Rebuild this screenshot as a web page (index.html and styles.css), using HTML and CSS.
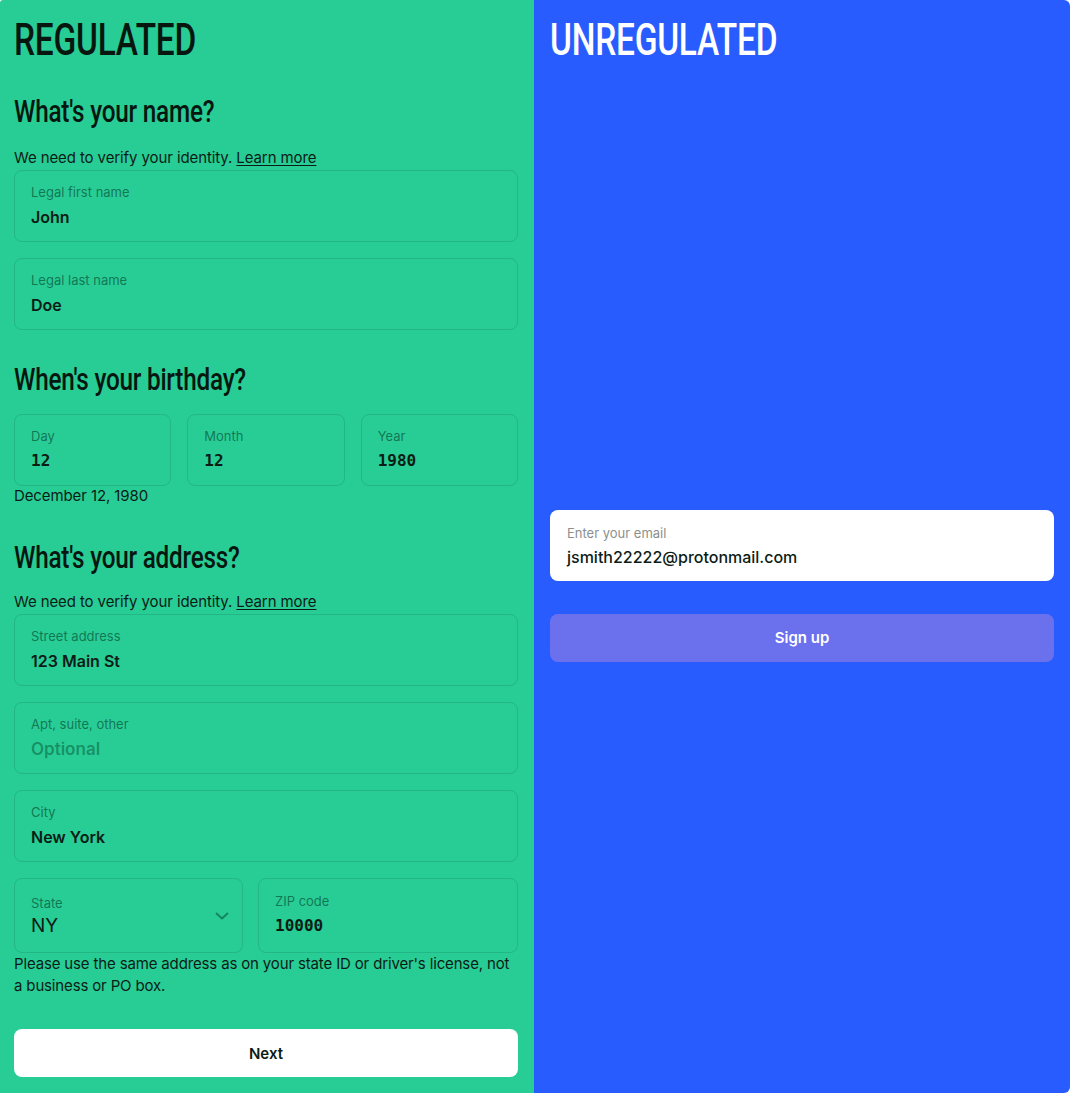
FILE: index.html
```html
<!DOCTYPE html>
<html lang="en">
<head>
<meta charset="utf-8">
<title>Regulated vs Unregulated</title>
<link rel="stylesheet" href="styles.css">
</head>
<body>
<div class="split">
  <section class="panel panel-green">
    <h1 class="title"><span class="squeeze">REGULATED</span></h1>

    <h2 class="section-title first"><span class="squeeze">What's your name?</span></h2>
    <p class="hint">We need to verify your identity. <a class="link" href="#">Learn more</a></p>
    <div class="field">
      <span class="label">Legal first name</span>
      <span class="value">John</span>
    </div>
    <div class="field gap-top">
      <span class="label">Legal last name</span>
      <span class="value">Doe</span>
    </div>

    <h2 class="section-title birthday"><span class="squeeze">When's your birthday?</span></h2>
    <div class="date-row">
      <div class="field">
        <span class="label">Day</span>
        <span class="value mono">12</span>
      </div>
      <div class="field">
        <span class="label">Month</span>
        <span class="value mono">12</span>
      </div>
      <div class="field">
        <span class="label">Year</span>
        <span class="value mono">1980</span>
      </div>
    </div>
    <p class="date-text">December 12, 1980</p>

    <h2 class="section-title address"><span class="squeeze">What's your address?</span></h2>
    <p class="hint hint-address">We need to verify your identity. <a class="link" href="#">Learn more</a></p>
    <div class="field">
      <span class="label">Street address</span>
      <span class="value">123 Main St</span>
    </div>
    <div class="field gap-top">
      <span class="label">Apt, suite, other</span>
      <span class="value placeholder">Optional</span>
    </div>
    <div class="field gap-top">
      <span class="label">City</span>
      <span class="value">New York</span>
    </div>
    <div class="state-row gap-top">
      <div class="field field-tall select">
        <span class="label label-state">State</span>
        <span class="value value-state">NY</span>
        <svg class="chevron" width="14" height="8" viewBox="0 0 14 8" aria-hidden="true"><path d="M1.5 1.5 L7 6.5 L12.5 1.5" fill="none" stroke="currentColor" stroke-width="1.8" stroke-linecap="round" stroke-linejoin="round"/></svg>
      </div>
      <div class="field field-tall">
        <span class="label">ZIP code</span>
        <span class="value mono">10000</span>
      </div>
    </div>
    <p class="note">Please use the same address as on your state ID or driver's license, not a business or PO box.</p>

    <button class="btn btn-next" type="button">Next</button>
  </section>

  <section class="panel panel-blue">
    <h1 class="title title-light"><span class="squeeze">UNREGULATED</span></h1>
    <div class="signup">
      <div class="email-field">
        <span class="label label-gray">Enter your email</span>
        <span class="value">jsmith22222@protonmail.com</span>
      </div>
      <button class="btn btn-signup" type="button">Sign up</button>
    </div>
  </section>
</div>
</body>
</html>
```

FILE: styles.css
```css
* {
  box-sizing: border-box;
}

html, body {
  margin: 0;
  padding: 0;
  background: #ffffff;
}

body {
  font-family: Inter, "Noto Sans", "Liberation Sans", sans-serif;
  color: #0c1c15;
}

.split {
  display: grid;
  grid-template-columns: 534px 1fr;
  height: 1093px;
}

.panel {
  display: flex;
  flex-direction: column;
  padding: 12px 16px 0 14px;
}

.panel-green {
  background: #28cc95;
  border-top-left-radius: 3px;
}

.panel-blue {
  background: #285cff;
  padding: 12px 16px 0 16px;
  border-top-right-radius: 6px;
  border-bottom-right-radius: 6px;
}

.title,
.section-title {
  margin: 0;
  font-family: Roboto, "DejaVu Sans Condensed", "Liberation Sans", sans-serif;
  font-weight: 500;
  color: #07170f;
  white-space: nowrap;
}

.squeeze {
  display: inline-block;
  transform: scaleX(0.76);
  transform-origin: left center;
}

.title {
  font-size: 44px;
  line-height: 56px;
  letter-spacing: -0.3px;
}

.title-light {
  color: #ffffff;
}

.section-title {
  font-size: 32px;
  line-height: 36px;
  letter-spacing: -0.3px;
}

.section-title.first {
  margin-top: 25px;
}

.section-title.birthday {
  margin-top: 31px;
}

.section-title.address {
  margin-top: 33px;
}

.hint {
  margin: 18px 0 1px;
  font-size: 15px;
  line-height: 22px;
  letter-spacing: -0.1px;
  color: #0c1c15;
}

.hint-address {
  margin-top: 16px;
}

.link {
  color: inherit;
  text-decoration: underline;
  text-underline-offset: 2px;
}

.field {
  position: relative;
  display: flex;
  flex-direction: column;
  height: 72px;
  padding: 13px 16px 0 16px;
  border: 1px solid rgba(0, 60, 35, 0.14);
  border-radius: 8px;
}

.gap-top {
  margin-top: 16px;
}

.label {
  font-size: 13px;
  line-height: 16px;
  color: rgba(0, 45, 25, 0.55);
}

.value {
  margin-top: 5px;
  font-size: 16px;
  line-height: 24px;
  font-weight: 600;
  color: #0c1c15;
}

.mono {
  font-family: "DejaVu Sans Mono", "Liberation Mono", monospace;
  font-size: 16px;
  font-weight: 700;
  letter-spacing: 0;
}

.placeholder {
  font-size: 17px;
  font-weight: 600;
  color: rgba(0, 60, 35, 0.42);
}

.date-row {
  display: grid;
  grid-template-columns: repeat(3, 1fr);
  gap: 16px;
  margin-top: 17px;
}

.date-text {
  margin: 0;
  font-size: 15px;
  line-height: 20px;
  letter-spacing: -0.1px;
}

.state-row {
  display: grid;
  grid-template-columns: 229px 1fr;
  gap: 15px;
}

.field-tall {
  height: 75px;
  padding-top: 14px;
}

.label-state {
  margin-top: 2px;
}

.value-state {
  margin-top: 3px;
  font-size: 19px;
  font-weight: 400;
}

.chevron {
  position: absolute;
  right: 13px;
  top: 33px;
  color: rgba(0, 60, 35, 0.5);
}

.note {
  margin: 0;
  font-size: 15px;
  line-height: 22px;
  letter-spacing: -0.15px;
}

.btn {
  display: block;
  width: 100%;
  height: 48px;
  border: none;
  border-radius: 8px;
  font-family: Inter, "Noto Sans", "Liberation Sans", sans-serif;
  font-size: 15px;
  font-weight: 600;
  cursor: pointer;
}

.btn-next {
  margin-top: 32px;
  background: #ffffff;
  color: #0c1c15;
}

.signup {
  display: flex;
  flex-direction: column;
  margin: auto 0;
  padding-top: 10px;
}

.email-field {
  display: flex;
  flex-direction: column;
  height: 71px;
  padding: 15px 17px 0 17px;
  background: #ffffff;
  border-radius: 8px;
}

.label-gray {
  color: #8b8f8d;
}

.email-field .value {
  margin-top: 4px;
  font-weight: 500;
}

.btn-signup {
  margin-top: 33px;
  background: #6b70ec;
  color: #ffffff;
}
```
